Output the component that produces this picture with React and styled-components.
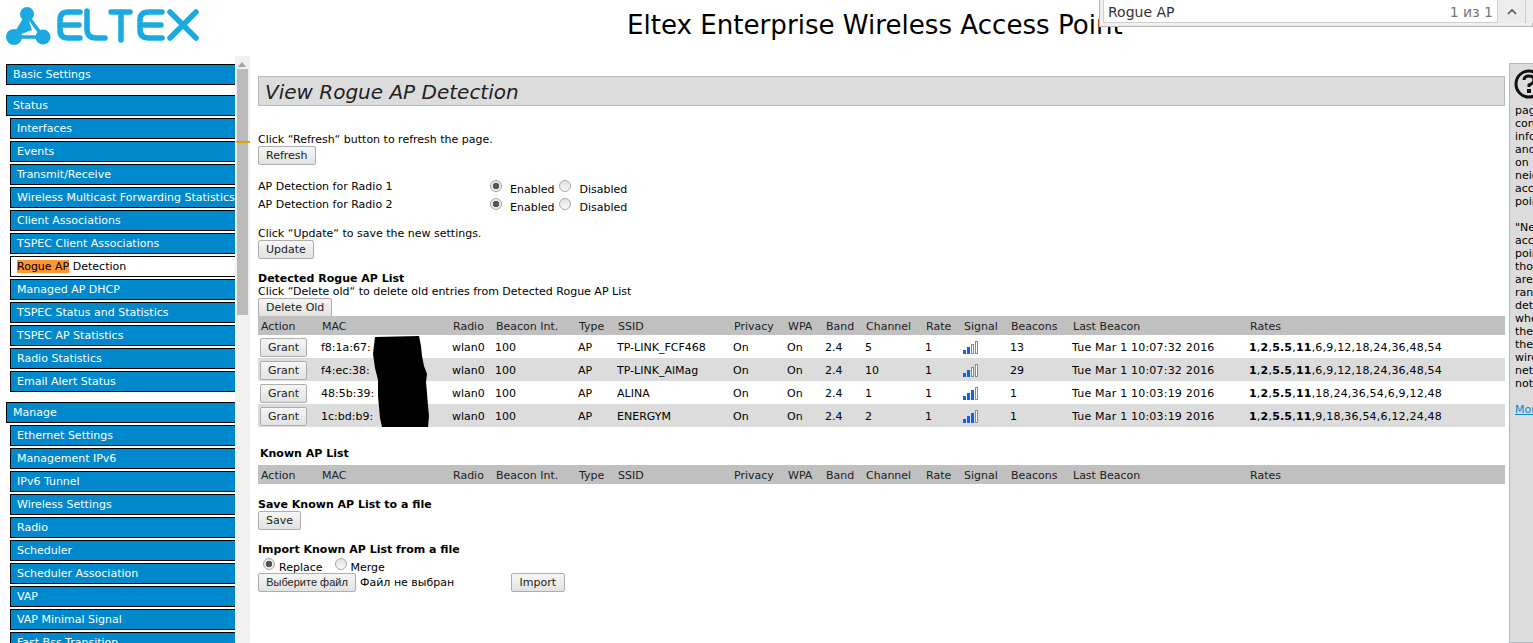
import React from 'react';
import styled, { createGlobalStyle } from 'styled-components';

const GlobalStyle = createGlobalStyle`
  html, body {
    margin: 0;
    padding: 0;
    height: 643px;
    overflow: hidden;
    background: #fff;
    font-family: "DejaVu Sans", Verdana, sans-serif;
    font-size: 11px;
    color: #000;
  }
`;

const Page = styled.div`
  position: relative;
  width: 1533px;
  height: 643px;
  overflow: hidden;
`;

const Header = styled.header`
  display: flex;
  height: 56px;
`;

const LogoBox = styled.div`
  width: 627px;
  padding: 5px 0 0 6px;
  box-sizing: border-box;
`;

const Title = styled.h1`
  margin: 0;
  padding-top: 9px;
  font-size: 26.1px;
  font-weight: normal;
  line-height: 32px;
  white-space: nowrap;
`;

const FindBar = styled.div`
  position: absolute;
  top: 0;
  left: 1099px;
  width: 434px;
  height: 27px;
  box-sizing: border-box;
  background: #f0f0f0;
  border: 1px solid #b8b8b8;
  border-top: none;
  padding: 0 0 3px 3px;
  display: flex;
`;

const FindInput = styled.div`
  width: 395px;
  flex: none;
  box-sizing: border-box;
  background: #fff;
  border: 1px solid #d0d0d0;
  border-top: none;
  display: flex;
  justify-content: space-between;
  align-items: center;
  padding: 2px 4px 0 4px;
  font-size: 14px;
  color: #333;
`;

const FindCount = styled.span`
  color: #777;
`;

const FindButton = styled.div`
  width: 27px;
  flex: none;
  display: flex;
  align-items: center;
  justify-content: center;
  background: #ececec;
  border-right: 1px solid #ccc;
`;

const Body = styled.div`
  display: flex;
  height: 587px;
`;

const Sidebar = styled.nav`
  position: relative;
  width: 250px;
  flex: none;
  display: flex;
  height: 587px;
  overflow: hidden;
`;

const MenuColumn = styled.div`
  width: 235px;
  padding: 8px 0 0 6px;
  box-sizing: border-box;
`;

const MenuGroup = styled.div`
  margin-bottom: 10px;
  display: flex;
  flex-direction: column;
  gap: 2px;
`;

const MenuItem = styled.div`
  height: 21px;
  box-sizing: border-box;
  margin-left: ${p => (p.$sub ? '4px' : '0')};
  padding-left: 6px;
  background: ${p => (p.$active ? '#fff' : '#0088cc')};
  color: ${p => (p.$active ? '#000' : '#fff')};
  border: 1px solid #000;
  border-width: 1px 0 1px 1px;
  line-height: 19px;
  white-space: nowrap;
  overflow: hidden;
`;

const Mark = styled.span`
  background: #ff9632;
  color: #000;
`;

const Scrollbar = styled.div`
  position: relative;
  width: 15px;
  background: #f1f1f1;
`;

const ScrollArrow = styled.div`
  position: absolute;
  top: 6px;
  left: 3px;
  border-left: 4px solid transparent;
  border-right: 4px solid transparent;
  border-bottom: 5px solid #a3a3a3;
`;

const ScrollThumb = styled.div`
  position: absolute;
  top: 13px;
  left: 2px;
  width: 11px;
  height: 246px;
  background: #bbbbbb;
`;

const ScrollHit = styled.div`
  position: absolute;
  top: 85px;
  left: 1px;
  width: 14px;
  height: 2px;
  background: #d9a300;
`;

const Main = styled.main`
  position: relative;
  width: 1247px;
  flex: none;
  margin-left: 8px;
  padding-top: 20px;
`;

const PageHeading = styled.h2`
  margin: 0;
  height: 30px;
  box-sizing: border-box;
  background: #dcdcdc;
  border: 1px solid #b4bac0;
  font-size: 20px;
  font-style: italic;
  font-weight: normal;
  line-height: 30px;
  padding-left: 6px;
  color: #222;
`;

const Hint = styled.div`
  line-height: 13px;
  margin-top: ${p => p.$top || 0}px;
  white-space: nowrap;
`;

const Button = styled.button`
  display: block;
  height: 19px;
  padding: 0 ${p => p.$pad || 7}px;
  margin: ${p => p.$margin || '0'};
  font-family: inherit;
  font-size: 11px;
  line-height: 15px;
  color: #222;
  background: linear-gradient(#f6f6f6, #e2e2e2);
  border: 1px solid #adadad;
  border-radius: 2px;
`;

const FileButton = styled(Button)`
  width: 98px;
  padding: 0;
  font-family: "Liberation Sans", Arial, sans-serif;
  font-size: 11px;
`;

const RadioRow = styled.div`
  display: flex;
  height: 18px;
  align-items: flex-start;
  margin-top: ${p => p.$top || 0}px;
`;

const RadioLabel = styled.div`
  width: 232px;
  line-height: 14px;
`;

const RadioText = styled.span`
  line-height: 14px;
  margin: 3px 5px 0 ${p => p.$left || 5}px;
`;

const RadioDot = styled.span`
  width: 12px;
  height: 12px;
  box-sizing: border-box;
  flex: none;
  border-radius: 50%;
  border: 1px solid #a8a8a8;
  background: ${p => (p.$on
    ? 'radial-gradient(circle, #555 0 3px, #e8e8e8 3.5px)'
    : 'linear-gradient(#e2e2e2, #f8f8f8)')};
  margin-left: ${p => p.$left || 0}px;
`;

const SectionTitle = styled.div`
  font-weight: bold;
  line-height: 13px;
  margin: ${p => p.$margin || '0'};
  white-space: nowrap;
`;

const Table = styled.table`
  border-collapse: collapse;
  table-layout: fixed;
  width: 1247px;
  margin-top: ${p => p.$top || 0}px;
`;

const HeadCell = styled.th`
  box-sizing: border-box;
  height: 19px;
  padding: 1px 0 0 ${p => p.$pad || 1}px;
  background: #c0c0c0;
  font-weight: normal;
  text-align: left;
  color: #222;
  white-space: nowrap;
`;

const Row = styled.tr`
  background: ${p => (p.$alt ? '#dcdcdc' : '#fff')};
`;

const Cell = styled.td`
  box-sizing: border-box;
  height: 23px;
  padding: 1px 0 0;
  white-space: nowrap;
  overflow: hidden;
  letter-spacing: ${p => p.$spacing || 0}px;
`;

const GrantButton = styled(Button)`
  width: 47px;
  margin-left: 2px;
  padding: 0;
`;

const SignalIcon = styled.svg`
  display: block;
`;

const Blob = styled.svg`
  position: absolute;
  left: 114px;
  top: 280px;
`;

const ImportRow = styled.div`
  display: flex;
  align-items: center;
  height: 19px;
`;

const FileLabel = styled.span`
  width: 151px;
  margin-left: 4px;
`;

const MergeRow = styled.div`
  display: flex;
  height: 15px;
  padding-left: 5px;
  margin-top: 2px;
`;

const HelpPanel = styled.aside`
  width: 24px;
  margin: 7px 0 0 4px;
  height: 580px;
  flex: none;
  box-sizing: border-box;
  background: #dcdcdc;
  border: 1px solid #b4bac0;
  border-right: none;
  padding-left: 5px;
  overflow: hidden;
  line-height: 13px;
  white-space: nowrap;
`;

const HelpIcon = styled.svg`
  display: block;
  margin: 5px 0 5px -1px;
`;

const HelpText = styled.div`
  margin-bottom: 13px;
`;

const HelpLink = styled.span`
  color: #0088cc;
  text-decoration: underline;
`;

const Logo = () => (
  <svg width="196" height="42" viewBox="0 0 196 42" fill="none">
    <path d="M21 10 L8 32 L37 32 Z" fill="#fff" stroke="#1ba9e1" strokeWidth="3.5" strokeLinejoin="round" />
    <path d="M21 10 L26 25 L10 31 Z" fill="#1ba9e1" />
    <circle cx="21" cy="9" r="7" fill="#1ba9e1" />
    <circle cx="8" cy="32" r="8" fill="#1ba9e1" />
    <circle cx="37" cy="32" r="7.5" fill="#1ba9e1" />
    <g stroke="#1ba9e1" strokeWidth="5.5" strokeLinecap="round" strokeLinejoin="round">
      <path d="M74 7 H62 Q54 7 54 15 V25 Q54 33 62 33 H74 M54 20 H73" />
      <path d="M81 6 V24 Q81 33 90 33 H99" />
      <path d="M105 7 H124 M115 7 V35" />
      <path d="M156 7 H143 Q134 7 134 15 V25 Q134 33 143 33 H156 M134 20 H155" />
      <path d="M164 7 L190 33 M190 7 L164 33" />
    </g>
  </svg>
);

const Signal = ({ level }) => (
  <SignalIcon width="16" height="14" viewBox="0 0 16 14">
    {[0, 1, 2, 3].map(i => {
      const h = 4 + i * 3;
      return i < level ? (
        <rect key={i} x={i * 4} y={14 - h} width="3" height={h} fill="#0f62ee" />
      ) : (
        <rect key={i} x={i * 4 + 0.5} y={14 - h + 0.5} width="2" height={h - 1} fill="#fff" stroke="#8a8a8a" />
      );
    })}
  </SignalIcon>
);

const groups = [
  { title: 'Basic Settings', items: [] },
  {
    title: 'Status',
    items: ['Interfaces', 'Events', 'Transmit/Receive', 'Wireless Multicast Forwarding Statistics', 'Client Associations', 'TSPEC Client Associations', 'Rogue AP Detection', 'Managed AP DHCP', 'TSPEC Status and Statistics', 'TSPEC AP Statistics', 'Radio Statistics', 'Email Alert Status'],
  },
  {
    title: 'Manage',
    items: ['Ethernet Settings', 'Management IPv6', 'IPv6 Tunnel', 'Wireless Settings', 'Radio', 'Scheduler', 'Scheduler Association', 'VAP', 'VAP Minimal Signal', 'Fast Bss Transition'],
  },
];

const columns = [
  ['Action', 63, 3], ['MAC', 131], ['Radio', 43], ['Beacon Int.', 83], ['Type', 39], ['SSID', 116],
  ['Privacy', 54], ['WPA', 38], ['Band', 40], ['Channel', 60], ['Rate', 38], ['Signal', 47],
  ['Beacons', 62], ['Last Beacon', 177], ['Rates', 256],
];

const rogues = [
  { mac: 'f8:1a:67:', ssid: 'TP-LINK_FCF468', ch: 5, level: 2, beacons: 13, last: 'Tue Mar 1 10:07:32 2016', rest: '6,9,12,18,24,36,48,54' },
  { mac: 'f4:ec:38:', ssid: 'TP-LINK_AlMag', ch: 10, level: 2, beacons: 29, last: 'Tue Mar 1 10:07:32 2016', rest: '6,9,12,18,24,36,48,54' },
  { mac: '48:5b:39:', ssid: 'ALINA', ch: 1, level: 3, beacons: 1, last: 'Tue Mar 1 10:03:19 2016', rest: '18,24,36,54,6,9,12,48' },
  { mac: '1c:bd:b9:', ssid: 'ENERGYM', ch: 2, level: 3, beacons: 1, last: 'Tue Mar 1 10:03:19 2016', rest: '9,18,36,54,6,12,24,48' },
];

const helpBlocks = [
  ['page', 'contains', 'information', 'and', 'on', 'neighboring', 'access', 'points'],
  ['"Neighboring"', 'access', 'points', 'those', 'are', 'range', 'detected', 'when', 'they', 'the', 'wireless', 'network', 'not'],
];

const Colgroup = () => (
  <colgroup>
    {columns.map(([name, w]) => <col key={name} width={w} />)}
  </colgroup>
);

const HeadRow = () => (
  <tr>
    {columns.map(([name, , pad]) => <HeadCell key={name} $pad={pad}>{name}</HeadCell>)}
  </tr>
);

const Radio = ({ on, label, left }) => (
  <>
    <RadioDot $on={on} />
    <RadioText $left={left}>{label}</RadioText>
  </>
);

export default function App() {
  return (
    <Page>
      <GlobalStyle />
      <Header>
        <LogoBox><Logo /></LogoBox>
        <Title>Eltex Enterprise Wireless Access Point</Title>
      </Header>
      <FindBar>
        <FindInput>
          <span>Rogue AP</span>
          <FindCount>1 из 1</FindCount>
        </FindInput>
        <FindButton>
          <svg width="10" height="6" viewBox="0 0 10 6" fill="none">
            <path d="M1 5 L5 1 L9 5" stroke="#555" strokeWidth="1.6" />
          </svg>
        </FindButton>
        <FindButton />
      </FindBar>
      <Body>
        <Sidebar>
          <MenuColumn>
            {groups.map(g => (
              <MenuGroup key={g.title}>
                <MenuItem>{g.title}</MenuItem>
                {g.items.map(item => (
                  item === 'Rogue AP Detection' ? (
                    <MenuItem key={item} $sub $active><Mark>Rogue AP</Mark> Detection</MenuItem>
                  ) : (
                    <MenuItem key={item} $sub>{item}</MenuItem>
                  )
                ))}
              </MenuGroup>
            ))}
          </MenuColumn>
          <Scrollbar>
            <ScrollArrow />
            <ScrollThumb />
            <ScrollHit />
          </Scrollbar>
        </Sidebar>
        <Main>
          <PageHeading>View Rogue AP Detection</PageHeading>
          <Hint $top={27}>Click “Refresh“ button to refresh the page.</Hint>
          <Button>Refresh</Button>
          <RadioRow $top={15}>
            <RadioLabel>AP Detection for Radio 1</RadioLabel>
            <Radio on label="Enabled" left={8} />
            <Radio label="Disabled" left={8} />
          </RadioRow>
          <RadioRow>
            <RadioLabel>AP Detection for Radio 2</RadioLabel>
            <Radio on label="Enabled" left={8} />
            <Radio label="Disabled" left={8} />
          </RadioRow>
          <Hint $top={11}>Click “Update“ to save the new settings.</Hint>
          <Button>Update</Button>
          <SectionTitle $margin="13px 0 0">Detected Rogue AP List</SectionTitle>
          <Hint>Click “Delete old“ to delete old entries from Detected Rogue AP List</Hint>
          <Button $margin="0 0 -1px">Delete Old</Button>
          <Table>
            <Colgroup />
            <thead><HeadRow /></thead>
            <tbody>
              {rogues.map((r, i) => (
                <Row key={r.mac} $alt={i % 2 === 1}>
                  <Cell><GrantButton>Grant</GrantButton></Cell>
                  <Cell>{r.mac}</Cell>
                  <Cell>wlan0</Cell>
                  <Cell>100</Cell>
                  <Cell>AP</Cell>
                  <Cell>{r.ssid}</Cell>
                  <Cell>On</Cell>
                  <Cell>On</Cell>
                  <Cell>2.4</Cell>
                  <Cell>{r.ch}</Cell>
                  <Cell>1</Cell>
                  <Cell><Signal level={r.level} /></Cell>
                  <Cell>{r.beacons}</Cell>
                  <Cell $spacing={0.2}>{r.last}</Cell>
                  <Cell $spacing={0.2}><b>1</b>,<b>2</b>,<b>5.5</b>,<b>11</b>,{r.rest}</Cell>
                </Row>
              ))}
            </tbody>
          </Table>
          <Blob width="58" height="92" viewBox="0 0 58 92">
            <path d="M3 1 L47 0 L49 10 L50 20 L52 30 L55 38 L54 46 L55 57 L56 70 L57 80 L56 91 L10 91 L8 82 L6 60 L6 44 L3 32 L1 18 Z" fill="#000" />
          </Blob>
          <SectionTitle $margin="20px 0 0 2px">Known AP List</SectionTitle>
          <Table $top={5}>
            <Colgroup />
            <thead><HeadRow /></thead>
          </Table>
          <SectionTitle $margin="14px 0 0">Save Known AP List to a file</SectionTitle>
          <Button>Save</Button>
          <SectionTitle $margin="13px 0 0">Import Known AP List from a file</SectionTitle>
          <MergeRow>
            <Radio on label="Replace" left={4} />
            <RadioDot $left={7} />
            <RadioText $left={4}>Merge</RadioText>
          </MergeRow>
          <ImportRow>
            <FileButton>Выберите файл</FileButton>
            <FileLabel>Файл не выбран</FileLabel>
            <Button $pad={7.5}>Import</Button>
          </ImportRow>
        </Main>
        <HelpPanel>
          <HelpIcon width="30" height="30" viewBox="0 0 30 30" fill="none">
            <circle cx="15" cy="15" r="13" stroke="#111" strokeWidth="3" />
            <path d="M10 11 Q10 7 15 7 Q20 7 20 11 Q20 14 15 16 V18" stroke="#111" strokeWidth="3" />
            <rect x="13" y="20" width="4" height="4" fill="#111" />
          </HelpIcon>
          {helpBlocks.map(b => (
            <HelpText key={b[0]}>
              {b.map((line, i) => <div key={i}>{line}</div>)}
            </HelpText>
          ))}
          <HelpLink>More</HelpLink>
        </HelpPanel>
      </Body>
    </Page>
  );
}
